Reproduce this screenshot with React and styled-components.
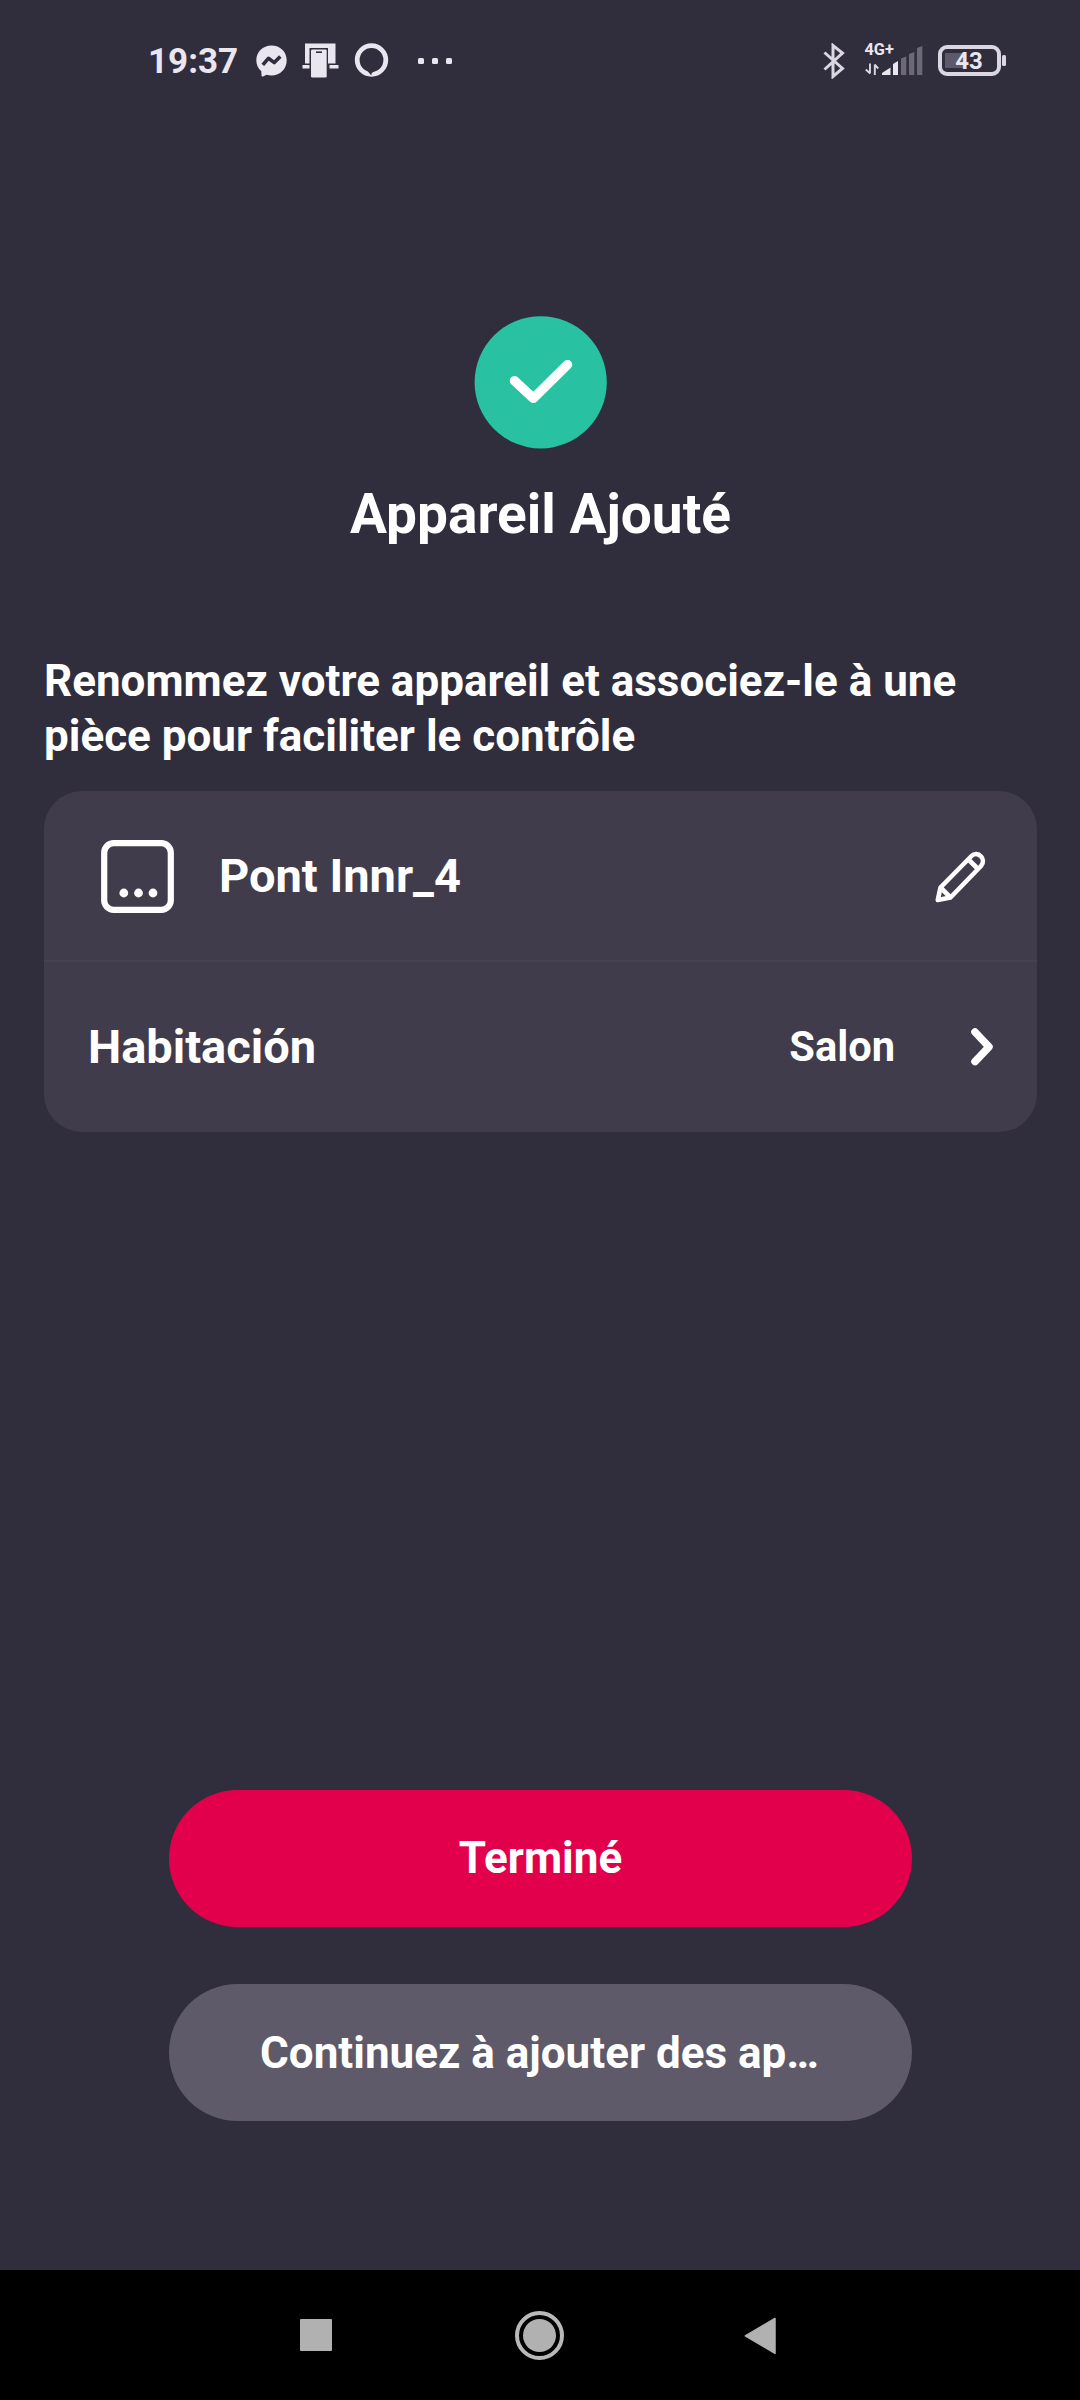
import React, { useState } from 'react';

import styled, { createGlobalStyle } from 'styled-components';

const GlobalStyle = createGlobalStyle`
  * {
    box-sizing: border-box;
  }
  body {
    margin: 0;
    background-color: #302d3c;
  }
  svg {
    display: block;
    flex: none;
  }
`;

export const Screen = styled.div`
  display: flex;
  flex-direction: column;
  width: 1080px;
  height: 2400px;
  background-color: #302d3c;
  color: #ffffff;
  font-family: Roboto, 'Liberation Sans', sans-serif;
  font-weight: 700;
`;

export const StatusBar = styled.header`
  display: flex;
  justify-content: space-between;
  align-items: center;
  height: 120px;
  padding: 1px 74px 0 148px;
  color: #e9e6f0;
`;

export const StatusGroup = styled.div`
  display: flex;
  align-items: center;
`;

export const Clock = styled.span`
  width: 108px;
  padding-top: 2px;
  font-size: 35px;
  line-height: 40px;
`;

export const NotifIcons = styled.div`
  display: flex;
  align-items: center;
  gap: 15px;
`;

export const MoreDots = styled.div`
  display: flex;
  gap: 8px;
  margin-left: 29px;
`;

export const MoreDot = styled.i`
  width: 6px;
  height: 6px;
  border-radius: 1.5px;
  background-color: #e9e6f0;
`;

export const Network = styled.div`
  display: flex;
  flex-direction: column;
  width: 58px;
  height: 35px;
  margin: 0 15px 0 20px;
`;

export const NetworkLabel = styled.span`
  height: 0;
  font-size: 16.3px;
  line-height: 14px;
`;

export const Battery = styled.div`
  display: flex;
  align-items: center;
  gap: 1.5px;
`;

export const BatteryBody = styled.div`
  display: flex;
  justify-content: center;
  align-items: center;
  width: 63px;
  height: 31px;
  border: 4px solid #dad7e3;
  border-radius: 9px;
  background: linear-gradient(#5d596a, #5d596a) 3px center / 20px 15px no-repeat;
  font-size: 24px;
  line-height: 24px;
`;

export const BatteryTip = styled.i`
  width: 4px;
  height: 11px;
  border-radius: 1.5px;
  background-color: #dad7e3;
`;

export const Content = styled.main`
  display: flex;
  flex: 1;
  flex-direction: column;
  padding: 196px 43px 149px 44px;
`;

export const Hero = styled.div`
  display: flex;
  flex-direction: column;
  align-items: center;
`;

export const Title = styled.h1`
  margin: 32px 0 0;
  font-size: 55px;
  line-height: 66px;
`;

export const Description = styled.p`
  margin: 107px 0 27px;
  font-size: 44px;
  line-height: 55px;
`;

export const Card = styled.section`
  border-radius: 38px;
  background-color: #403c4c;
`;

export const Row = styled.div`
  display: flex;
  align-items: center;
  height: ${(props) => (props.$divided ? '171px' : '170px')};
  padding: ${(props) => (props.$divided ? '2px 50px 0 57px' : '0 43px 1px 44px')};
  border-bottom: ${(props) => (props.$divided ? '2px solid #464252' : 'none')};
  cursor: pointer;
`;

export const RowLabel = styled.span`
  flex: 1;
  font-size: 47px;
  line-height: 56px;
`;

export const DeviceName = styled(RowLabel)`
  margin-left: 45px;
  padding-bottom: 1px;
`;

export const RoomName = styled.span`
  margin-right: 75px;
  font-size: 41.6px;
  line-height: 50px;
`;

export const Actions = styled.div`
  display: flex;
  flex-direction: column;
  align-items: center;
  gap: 57px;
  margin-top: auto;
`;

export const Button = styled.button`
  width: 743px;
  height: 137px;
  border: none;
  border-radius: 69px;
  padding: 0 80px 1px;
  background-color: #e2004d;
  color: #ffffff;
  font-family: inherit;
  font-size: 44px;
  font-weight: 700;
  line-height: 52px;
  white-space: nowrap;
  cursor: pointer;
`;

export const SecondaryButton = styled(Button)`
  padding: 0 81px 0 79px;
  background-color: #5e5a69;
`;

export const NavBar = styled.nav`
  display: flex;
  align-items: center;
  height: 130px;
  padding-left: 300px;
  background-color: #000000;
`;

export const RecentsKey = styled.i`
  width: 32px;
  height: 32px;
  border-radius: 1px;
  background-color: #b1b1b1;
`;

export const HomeKey = styled.i`
  display: flex;
  justify-content: center;
  align-items: center;
  width: 49px;
  height: 49px;
  margin: 0 180px 0 183px;
  border: 4px solid #b9b9b9;
  border-radius: 50%;

  &::after {
    content: '';
    width: 33px;
    height: 33px;
    border-radius: 50%;
    background-color: #b1b1b1;
  }
`;

function MessengerIcon() {
  return (
    <svg width="31" height="32" viewBox="0 0 31 32">
      <path
        fill="#e9e6f0"
        d="M15.5 0.5C6.8 0.5 0.3 6.9 0.3 15.2c0 4.500 1.900 8.400 5 11.100l0.200 4.200c0 0.900 0.800 1.300 1.500 1l3.600-1.700c1.500 0.400 3.200 0.700 4.900 0.700 8.700 0 15.200-6.500 15.200-15.200S24.200 0.500 15.500 0.500z"
      />
      <path
        fill="none"
        stroke="#302d3c"
        strokeWidth="3.6"
        strokeLinejoin="round"
        d="M6.800 19.800L12.400 13.300 18.300 17.600 24.300 11.600"
      />
    </svg>
  );
}

function ScreenShareIcon() {
  return (
    <svg width="37" height="35" viewBox="0 0 37 35">
      <path fill="#e9e6f0" d="M3 0.500h30.500v20H26V5H7.500v15.500H3z" />
      <path fill="#e9e6f0" d="M0.500 22h7v3.500h-7zM27.500 22h9v3.500h-9z" />
      <rect x="9" y="6.500" width="15.700" height="28" rx="1.200" fill="#e9e6f0" />
      <path stroke="#302d3c" strokeWidth="1.600" d="M14 9.200h6" />
    </svg>
  );
}

function AlexaIcon() {
  return (
    <svg width="35" height="35" viewBox="0 0 35 35">
      <circle cx="17.500" cy="17" r="14.300" fill="none" stroke="#e9e6f0" strokeWidth="4.800" />
      <path fill="#302d3c" d="M13.500 28l3.800 4.500c0-2.300 1-3.400 5-5.300l-4-2z" />
    </svg>
  );
}

function BluetoothIcon() {
  return (
    <svg width="22" height="36" viewBox="0 0 22 36">
      <path
        fill="none"
        stroke="#dad7e3"
        strokeWidth="3"
        d="M1.500 9.500L19.500 25.500 10 33.500V2.500L19.500 10 1.500 26.500"
      />
    </svg>
  );
}

function SignalIcon() {
  return (
    <svg width="58" height="34" viewBox="0 0 58 34">
      <g fill="none" stroke="#dad7e3" strokeWidth="1.900">
        <path d="M5 20.500v10M5.200 30.500L0.800 26.500" />
        <path d="M9.800 32V21.500M9.600 21.500L13.200 25.500" />
      </g>
      <path fill="#e9e6f0" d="M25.500 24.500v7.500h-8.500v-2z" />
      <path fill="#e9e6f0" d="M28 21l5-3v14h-5z" />
      <path
        fill="#6c6878"
        d="M36 15.500l5.300-2V32H36zM44 11l5.300-2V32H44zM52 5l5.300-2V32H52z"
      />
    </svg>
  );
}

function CheckIcon() {
  return (
    <svg width="133" height="133" viewBox="0 0 133 133">
      <circle cx="66.700" cy="66.300" r="66.100" fill="#28c2a2" />
      <path
        fill="none"
        stroke="#ffffff"
        strokeWidth="9.500"
        strokeLinecap="round"
        strokeLinejoin="round"
        d="M40.500 64.800L59.300 82.300 93.500 48.700"
      />
    </svg>
  );
}

function DeviceIcon() {
  return (
    <svg width="73" height="73" viewBox="0 0 73 73">
      <rect
        x="3.200"
        y="3.200"
        width="66.600"
        height="66.600"
        rx="9.500"
        fill="none"
        stroke="#ffffff"
        strokeWidth="6.200"
      />
      <g fill="#ffffff">
        <circle cx="22.800" cy="53" r="4.400" />
        <circle cx="37.500" cy="53" r="4.400" />
        <circle cx="52" cy="53" r="4.400" />
      </g>
    </svg>
  );
}

function PencilIcon() {
  return (
    <svg width="52" height="52" viewBox="0 0 52 52">
      <g fill="none" stroke="#ffffff" strokeWidth="4.600" strokeLinejoin="round">
        <path d="M2.800 49L5.500 36.500 36.500 5c6-6 15.500 3 9.500 10L15.500 46.500z" />
        <path d="M33.500 8.500l9.500 9.500M5.500 36.500l10 10" />
      </g>
    </svg>
  );
}

function ChevronIcon() {
  return (
    <svg width="24" height="40" viewBox="0 0 24 40">
      <path
        fill="none"
        stroke="#ffffff"
        strokeWidth="7.500"
        strokeLinecap="round"
        strokeLinejoin="round"
        d="M5 5L19 19.800 5 34.600"
      />
    </svg>
  );
}

function App() {
  const [device] = useState({ name: 'Pont Innr_4', room: 'Salon' });

  return (
    <>
      <GlobalStyle />
      <Screen>
        <StatusBar>
          <StatusGroup>
            <Clock>19:37</Clock>
            <NotifIcons>
              <MessengerIcon />
              <ScreenShareIcon />
              <AlexaIcon />
            </NotifIcons>
            <MoreDots>
              <MoreDot />
              <MoreDot />
              <MoreDot />
            </MoreDots>
          </StatusGroup>
          <StatusGroup>
            <BluetoothIcon />
            <Network>
              <NetworkLabel>4G+</NetworkLabel>
              <SignalIcon />
            </Network>
            <Battery>
              <BatteryBody>43</BatteryBody>
              <BatteryTip />
            </Battery>
          </StatusGroup>
        </StatusBar>

        <Content>
          <Hero>
            <CheckIcon />
            <Title>Appareil Ajouté</Title>
          </Hero>
          <Description>
            Renommez votre appareil et associez-le à une pièce pour faciliter le
            contrôle
          </Description>
          <Card>
            <Row $divided>
              <DeviceIcon />
              <DeviceName>{device.name}</DeviceName>
              <PencilIcon />
            </Row>
            <Row>
              <RowLabel>Habitación</RowLabel>
              <RoomName>{device.room}</RoomName>
              <ChevronIcon />
            </Row>
          </Card>
          <Actions>
            <Button>Terminé</Button>
            <SecondaryButton>Continuez à ajouter des ap…</SecondaryButton>
          </Actions>
        </Content>

        <NavBar>
          <RecentsKey />
          <HomeKey />
          <svg width="33" height="37" viewBox="0 0 33 37">
            <path
              fill="#b1b1b1"
              stroke="#b1b1b1"
              strokeWidth="1.500"
              strokeLinejoin="round"
              d="M1.300 18.900L31 1.500v34.800z"
            />
          </svg>
        </NavBar>
      </Screen>
    </>
  );
}

export default App;
